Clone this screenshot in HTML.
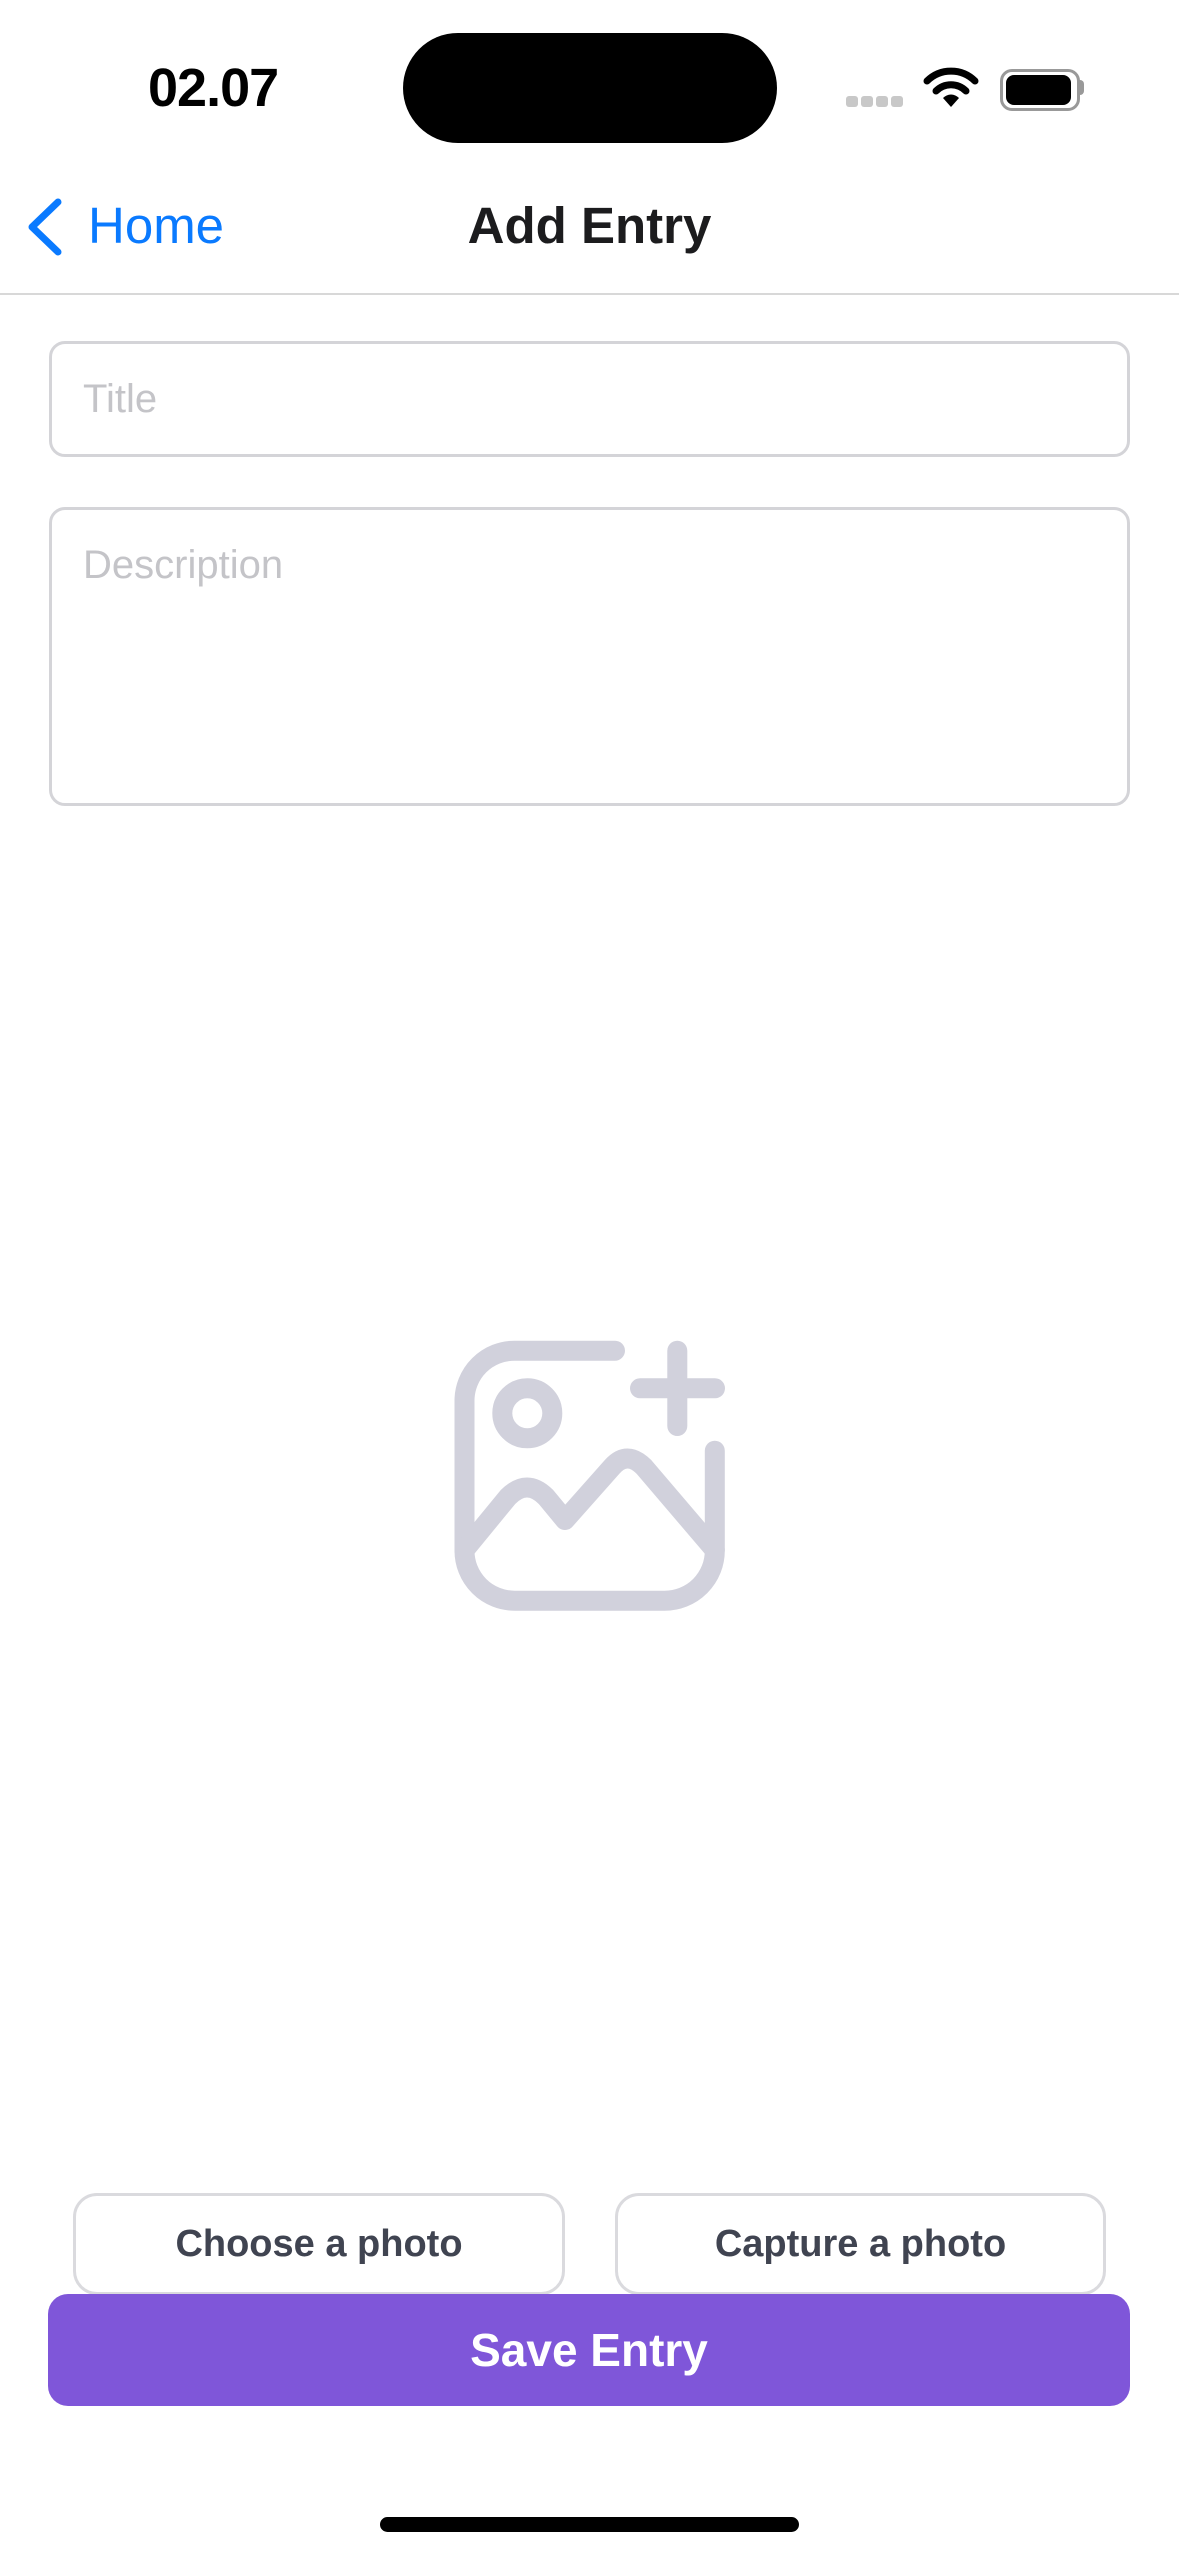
<!DOCTYPE html>
<html><head><meta charset="utf-8"><style>
html,body{margin:0;padding:0;background:#fff;}
body{width:1179px;height:2556px;position:relative;overflow:hidden;font-family:"Liberation Sans",sans-serif;}
.abs{position:absolute;}
.field{position:absolute;left:49px;width:1075px;border:3px solid #d4d4d8;border-radius:16px;box-sizing:content-box;}
.ph{position:absolute;left:31px;color:#c4c4c8;font-size:40px;}
.btn{position:absolute;top:2193px;height:96px;border:3px solid #dadade;border-radius:24px;background:#fff;color:#404451;font-size:38px;font-weight:bold;display:flex;align-items:center;justify-content:center;}
</style></head><body>
<div class="abs" style="left:148px;top:57px;font-size:54px;font-weight:bold;letter-spacing:-1px;color:#000;">02.07</div>
<div class="abs" style="left:403px;top:33px;width:374px;height:110px;background:#000;border-radius:55px;"></div>
<div class="abs" style="left:846px;top:96px;width:12px;height:11px;background:#c8c8c8;border-radius:3px;"></div>
<div class="abs" style="left:861px;top:96px;width:12px;height:11px;background:#c8c8c8;border-radius:3px;"></div>
<div class="abs" style="left:876px;top:96px;width:12px;height:11px;background:#c8c8c8;border-radius:3px;"></div>
<div class="abs" style="left:891px;top:96px;width:12px;height:11px;background:#c8c8c8;border-radius:3px;"></div>
<svg class="abs" style="left:923px;top:66px" width="56" height="42" viewBox="0 0 56 42">
<path d="M4 15 A34 34 0 0 1 52 15" fill="none" stroke="#000" stroke-width="7" stroke-linecap="round"/>
<path d="M13 25 A21 21 0 0 1 43 25" fill="none" stroke="#000" stroke-width="7" stroke-linecap="round"/>
<path d="M20 32 L28 41 L36 32 A11 11 0 0 0 20 32Z" fill="#000"/>
</svg>
<div class="abs" style="left:1000px;top:69px;width:74px;height:36px;border:3px solid #999;border-radius:12px;"></div>
<div class="abs" style="left:1006px;top:75px;width:65px;height:30px;background:#000;border-radius:8px;"></div>
<div class="abs" style="left:1079px;top:80px;width:5px;height:15px;background:#999;border-radius:0 4px 4px 0;"></div>

<svg class="abs" style="left:22px;top:196px" width="46" height="62" viewBox="0 0 46 62"><path d="M36 6 L10 31 L36 56" fill="none" stroke="#0a7aff" stroke-width="7" stroke-linecap="round" stroke-linejoin="round"/></svg>
<div class="abs" style="left:88px;top:196px;font-size:51px;color:#0a7aff;">Home</div>
<div class="abs" style="left:0;width:1179px;top:196px;text-align:center;font-size:51px;font-weight:bold;color:#1c1c1e;">Add Entry</div>
<div class="abs" style="left:0;top:293px;width:1179px;height:2px;background:#d8d8d8;"></div>

<div class="field" style="top:341px;height:110px;"><div class="ph" style="top:33px;">Title</div></div>
<div class="field" style="top:507px;height:293px;"><div class="ph" style="top:33px;">Description</div></div>

<svg class="abs" style="left:400px;top:1300px" width="360" height="340" viewBox="0 0 360 340" fill="none" stroke="#d1d1dc" stroke-width="20" stroke-linecap="round" stroke-linejoin="round">
<path d="M215 50.7 H114.5 A50 50 0 0 0 64.5 100.7 V250.7 A50 50 0 0 0 114.5 300.7 H264.8 A50 50 0 0 0 314.8 250.7 V150.7"/>
<circle cx="127.3" cy="113.3" r="25"/>
<path d="M277.3 50.7 V126 M240 88.3 H315"/>
<path d="M64.5 250 L108 197 Q127 178 146 197 L165 220 L212 167 Q227 150 244 167 L314.8 250"/>
</svg>

<div class="btn" style="left:73px;width:486px;">Choose a photo</div>
<div class="btn" style="left:615px;width:485px;">Capture a photo</div>
<div class="abs" style="left:48px;top:2294px;width:1082px;height:112px;background:#7f56d9;border-radius:20px;color:#fff;font-size:46px;font-weight:bold;display:flex;align-items:center;justify-content:center;">Save Entry</div>
<div class="abs" style="left:380px;top:2517px;width:419px;height:15px;background:#000;border-radius:8px;"></div>
</body></html>
